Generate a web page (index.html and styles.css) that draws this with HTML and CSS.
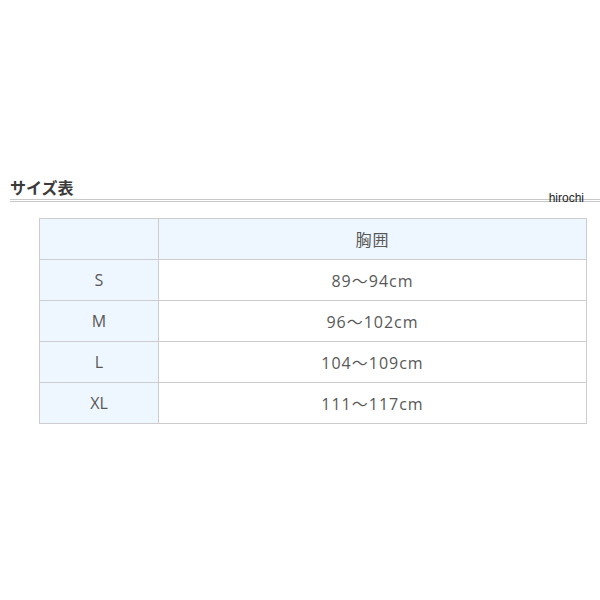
FILE: index.html
```html
<!DOCTYPE html>
<html lang="ja">
<head>
<meta charset="utf-8">
<title>サイズ表</title>
<link rel="stylesheet" href="styles.css">
</head>
<body>
<div class="page">
  <div class="section">
    <h2 class="title">サイズ表</h2>
    <span class="mark">hirochi</span>
  </div>
  <table class="size-table">
    <tr class="head"><th class="label"></th><th>胸囲</th></tr>
    <tr><th class="label">S</th><td>89～94cm</td></tr>
    <tr><th class="label">M</th><td>96～102cm</td></tr>
    <tr><th class="label">L</th><td>104～109cm</td></tr>
    <tr><th class="label">XL</th><td>111～117cm</td></tr>
  </table>
</div>
</body>
</html>
```
FILE: styles.css
```css
html, body {
  margin: 0;
  padding: 0;
  background: #fff;
}
.page {
  width: 600px;
  padding-top: 177px;
  font-family: "Noto Sans CJK JP", "Open Sans", sans-serif;
  color: #555;
}
.section {
  position: relative;
  margin-left: 10px;
  border-bottom: 3px double #c8c8c8;
}
.title {
  margin: 0;
  font-size: 16px;
  line-height: 20px;
  font-weight: bold;
  color: #3a3a3a;
  padding-bottom: 2px;
}
.mark {
  position: absolute;
  right: 16px;
  top: 15px;
  font-family: "Liberation Sans", Arial, sans-serif;
  font-size: 12px;
  line-height: 12px;
  color: #222;
}
.size-table {
  margin: 16px 0 0 39px;
  width: 548px;
  border-collapse: collapse;
  font-family: "Open Sans", "Noto Sans CJK JP", sans-serif;
  font-size: 16px;
}
.size-table th,
.size-table td {
  border: 1px solid #cdcdcd;
  height: 40px;
  padding: 0;
  text-align: center;
  font-weight: normal;
  color: #585858;
}
.size-table td {
  letter-spacing: 1px;
}
.size-table .label {
  width: 118px;
  background: #eef7ff;
}
.size-table .head th {
  background: #eef7ff;
  letter-spacing: 1px;
}
```
